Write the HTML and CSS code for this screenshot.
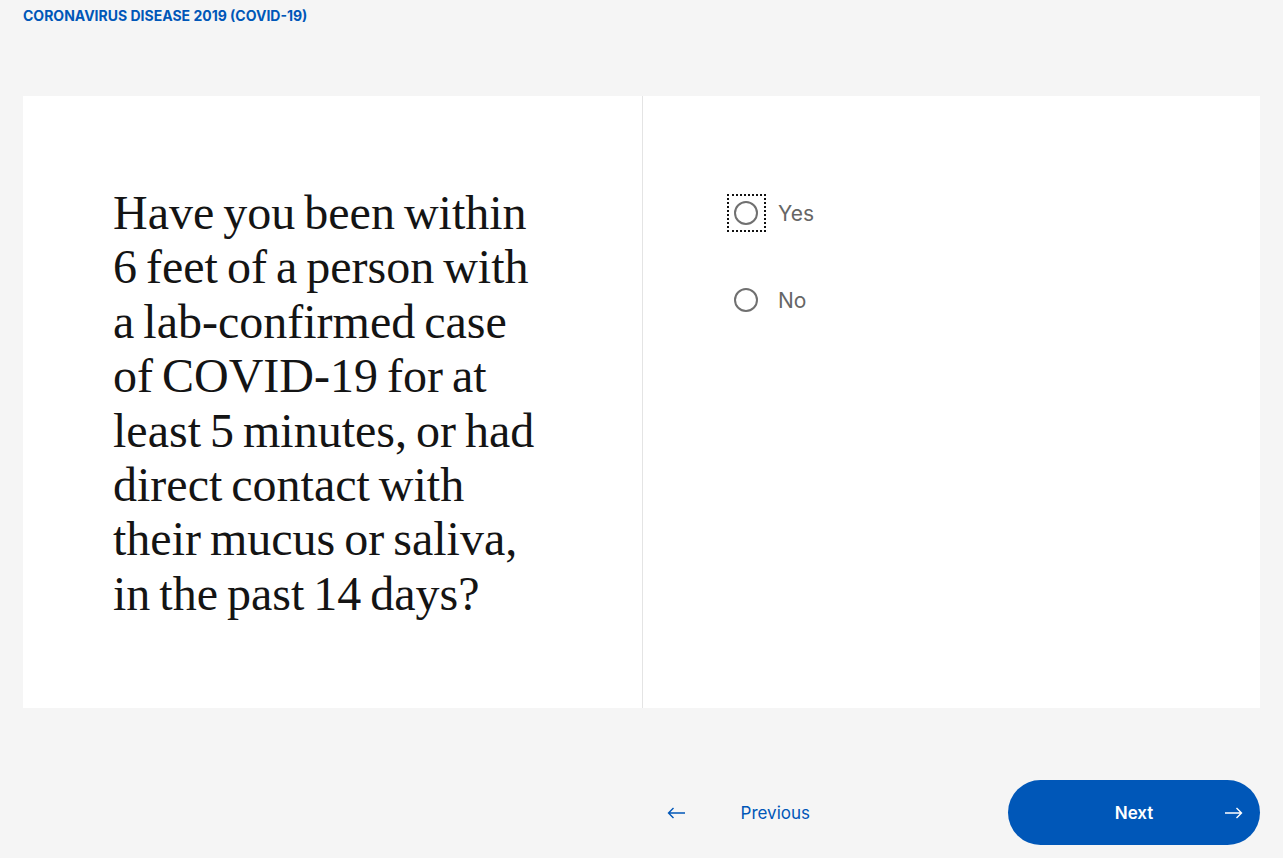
FILE: index.html
```html
<!doctype html>
<html lang="en">
<head>
<meta charset="utf-8">
<title>Coronavirus disease 2019 (COVID-19)</title>
<link rel="stylesheet" href="styles.css">
</head>
<body>

	<div class="topic">CORONAVIRUS DISEASE 2019 (COVID-19)</div>

	<div class="card">

		<div class="question">
			<h1>Have you been within<br>6 feet of a person with<br>a lab-confirmed case<br>of COVID-19 for at<br>least 5 minutes, or had<br>direct contact with<br>their mucus or saliva,<br>in the past 14 days?</h1>
		</div>

		<div class="answers">
			<label class="option focused"><span class="ring"></span><span class="txt">Yes</span></label>
			<label class="option"><span class="ring"></span><span class="txt">No</span></label>
		</div>

	</div>

	<div class="nav">
		<a class="prev" href="#">
			<svg class="arr" width="19" height="12" viewBox="0 0 19 12"><path d="M18 6H1.5M6.5 1L1.5 6l5 5" fill="none" stroke="currentColor" stroke-width="1.4"/></svg>
			<span>Previous</span>
		</a>
		<a class="next" href="#">
			<span>Next</span>
			<svg class="arr" width="18" height="12" viewBox="0 0 18 12"><path d="M0 6h16.5M11.5 1l5 5-5 5" fill="none" stroke="currentColor" stroke-width="1.4"/></svg>
		</a>
	</div>

</body>
</html>
```

FILE: styles.css
```css
	html { --blue: #0057b8; }

	body { background-color: #f5f5f5; font-family: Inter, "Noto Sans", sans-serif; margin: 0; padding: 0 23px; }

	a { text-decoration: none; }

	.topic { color: var( --blue ); font-size: 14px; font-weight: 700; height: 96px; line-height: 31px; }

	.card { background-color: #fff; display: grid; grid-template-columns: 620px 1fr; height: 612px; }

	.question { border-right: 1px solid #e4e4e4; padding: 90px 20px 0 90px; }
	.question h1 { color: #141414; font-family: "Liberation Serif", serif; font-size: 48px; font-weight: 400; letter-spacing: 0;
		line-height: 54.4px; margin: 0; white-space: nowrap; word-spacing: -3px; }

	.answers { display: flex; flex-direction: column; gap: 63px; padding: 105px 0 0 91px; }

	.option { align-items: center; color: #666; display: flex; font-size: 21px; gap: 20px; height: 24px; }
	.ring { border: 2px solid #707070; border-radius: 50%; box-sizing: border-box; height: 24px; position: relative; width: 24px; }
	.focused .ring::after { border: 2px dotted #111; content: ''; inset: -9px -10px -9px -9px; position: absolute; }

	.nav { align-items: center; display: flex; justify-content: flex-end; padding-top: 72px; }

	.prev { align-items: center; color: var( --blue ); display: flex; font-size: 17px; gap: 55px; margin-right: 198px; }

	.next { align-items: center; background-color: var( --blue ); border-radius: 33px; box-sizing: border-box; color: #fff; display: flex;
		font-size: 17px; font-weight: 600; height: 65px; justify-content: center; position: relative; width: 252px; }
	.next .arr { position: absolute; right: 17px; }
```
